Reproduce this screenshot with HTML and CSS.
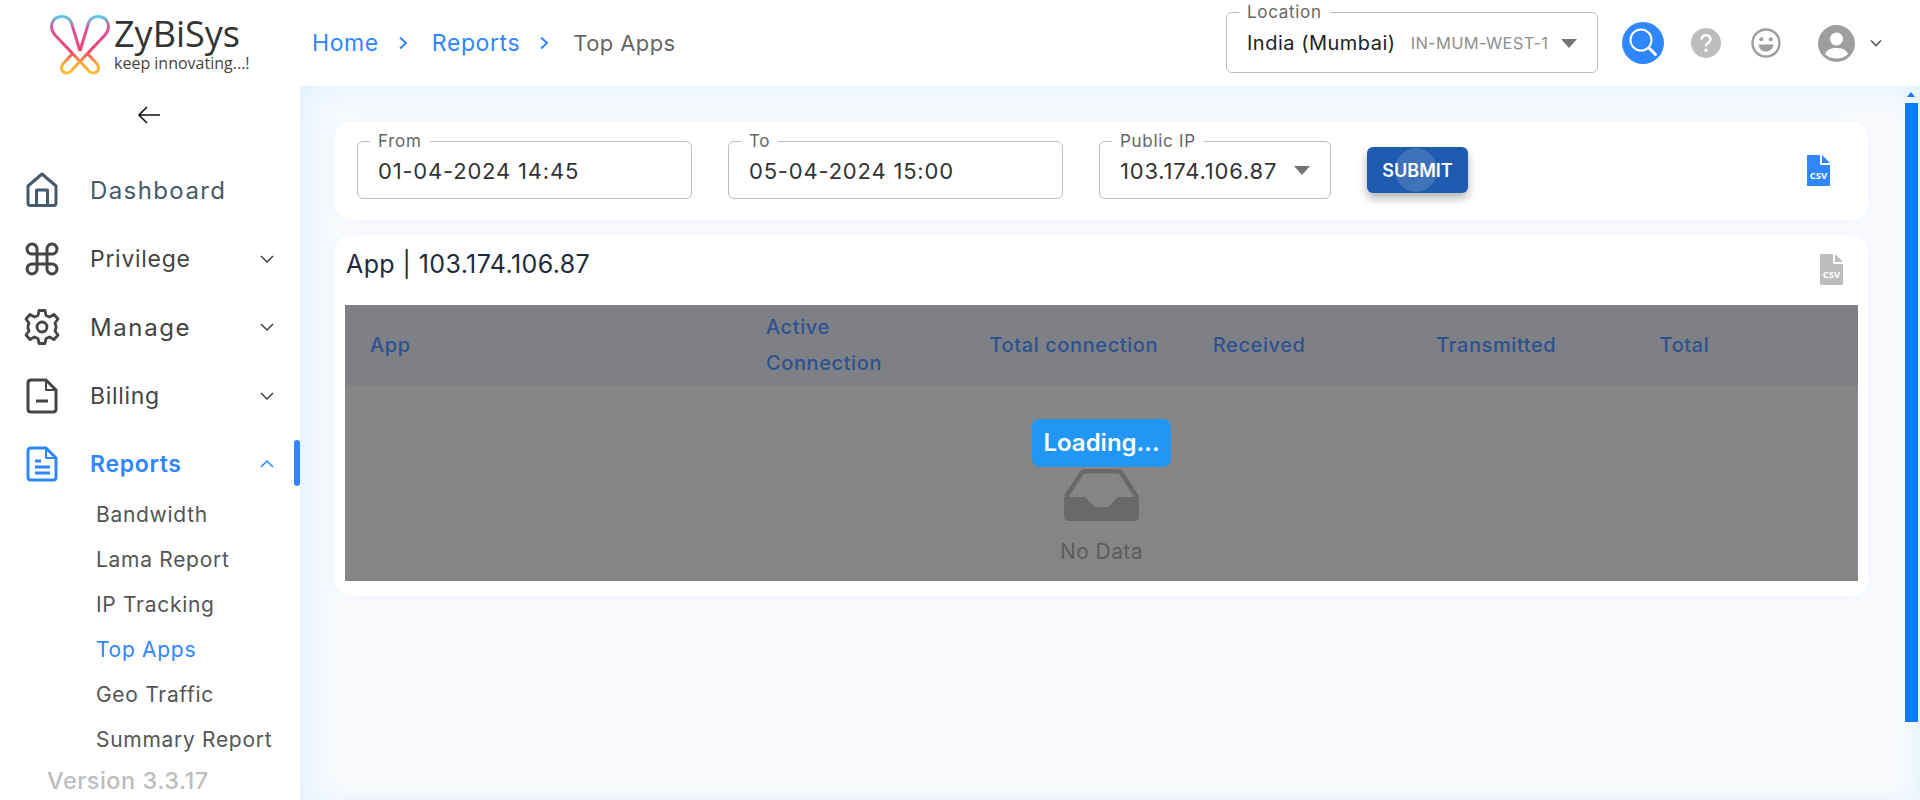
FILE: index.html

```html
<!DOCTYPE html>
<html lang="en">
<head>
  <meta charset="UTF-8">
  <meta name="viewport" content="width=device-width, initial-scale=1.0">
  <title>ZyBiSys - Top Apps</title>
  <link rel="stylesheet" href="styles.css">
</head>
<body>
  <header class="topbar">
    <div class="brand">
      <svg class="brand-mark" viewBox="0 0 60 60" fill="none">
        <defs>
          <linearGradient id="logoGrad" gradientUnits="userSpaceOnUse" x1="0" y1="0" x2="0" y2="60">
            <stop offset="0" stop-color="#4fd9ee"/>
            <stop offset=".22" stop-color="#d9559b"/>
            <stop offset=".6" stop-color="#f2456b"/>
            <stop offset=".8" stop-color="#fca73a"/>
            <stop offset="1" stop-color="#fbc02d"/>
          </linearGradient>
        </defs>
        <path d="M30 36L21.5 8C20 3.5 16 1.5 11.5 1.5C5 1.5 1.5 6.5 1.5 11.5C1.5 15 3 17.5 5 20L38 55C40 58 44 59 46.5 57C49 55 49 51 47 49L37 38" stroke="url(#logoGrad)" stroke-width="3"/>
        <path d="M30 36L38.5 8C40 3.5 44 1.5 48.5 1.5C55 1.5 58.5 6.5 58.5 11.5C58.5 15 57 17.5 55 20L22 55C20 58 16 59 13.5 57C11 55 11 51 13 49L23 38" stroke="url(#logoGrad)" stroke-width="3"/>
      </svg>
      <div class="brand-text">
        <div class="brand-name">ZyBiSys</div>
        <div class="brand-tag">keep innovating...!</div>
      </div>
    </div>
    <nav class="crumbs">
      <a href="#">Home</a>
      <svg class="crumb-sep" viewBox="0 0 10 14" fill="none"><path d="M2 1.5L8 7L2 12.5" stroke="#2f86ff" stroke-width="2"/></svg>
      <a href="#">Reports</a>
      <svg class="crumb-sep" viewBox="0 0 10 14" fill="none"><path d="M2 1.5L8 7L2 12.5" stroke="#2f86ff" stroke-width="2"/></svg>
      <span>Top Apps</span>
    </nav>
    <div class="top-actions">
      <fieldset class="field field-location">
        <legend>Location</legend>
        <div class="field-value">
          <span class="loc-name">India (Mumbai)</span>
          <span class="loc-code">IN-MUM-WEST-1</span>
          <span class="caret"></span>
        </div>
      </fieldset>
      <button class="search-btn">
        <svg viewBox="0 0 42 42" fill="none"><circle cx="19" cy="18" r="10.5" stroke="#fff" stroke-width="2"/><path d="M27 26L33.5 32.5" stroke="#fff" stroke-width="3" stroke-linecap="round"/></svg>
      </button>
      <svg class="top-icon icon-help" viewBox="0 0 30 30"><circle cx="15" cy="15" r="15" fill="#bdbdbd"/><path d="M10.5 11.5C10.5 8.8 12.5 7.3 15 7.3C17.6 7.3 19.5 8.9 19.5 11.2C19.5 13 18.5 14 17 15C15.6 16 15 16.6 15 18.3" fill="none" stroke="#fff" stroke-width="2.6"/><circle cx="15" cy="22.2" r="1.8" fill="#fff"/></svg>
      <svg class="top-icon icon-smile" viewBox="0 0 30 30"><circle cx="15" cy="15" r="13.5" fill="none" stroke="#9e9e9e" stroke-width="2.4"/><circle cx="10.3" cy="11.3" r="2" fill="#9e9e9e"/><circle cx="19.7" cy="11.3" r="2" fill="#9e9e9e"/><path d="M7.5 16.5H22.5C22 21 19 23.5 15 23.5C11 23.5 8 21 7.5 16.5Z" fill="#9e9e9e"/></svg>
      <svg class="top-avatar" viewBox="0 0 37 37"><circle cx="18.5" cy="18.5" r="18.5" fill="#9e9e9e"/><circle cx="18.5" cy="14" r="6.5" fill="#fff"/><path d="M7 29C9 24.5 13 23 18.5 23C24 23 28 24.5 30 29C27 32 23 33.5 18.5 33.5C14 33.5 10 32 7 29Z" fill="#fff"/></svg>
      <svg class="top-chevron" viewBox="0 0 12 8" fill="none"><path d="M1 1.5L6 6.5L11 1.5" stroke="#555" stroke-width="1.6"/></svg>
    </div>
  </header>

  <div class="shell">
    <aside class="sidebar">
      <div class="collapse">
        <svg viewBox="0 0 24 20" fill="none"><path d="M23 10H2M10 2L2 10L10 18" stroke="#111" stroke-width="1.6"/></svg>
      </div>
      <ul class="menu">
        <li class="menu-item item-home">
          <svg class="menu-icon" viewBox="0 0 36 36" fill="none" stroke="#455a6a" stroke-width="3" stroke-linejoin="round"><path d="M18 2L32 14V31C32 32.5 31 33.5 29.5 33.5H6.5C5 33.5 4 32.5 4 31V14Z"/><path d="M12.5 33V18H23.5V33"/></svg>
          <span>Dashboard</span>
        </li>
        <li class="menu-item">
          <svg class="menu-icon" viewBox="0 0 36 36" fill="none" stroke="#444" stroke-width="3"><path d="M13 13H23V23H13ZM13 13H8.5A5 5 0 1 1 13 8.5ZM23 13V8.5A5 5 0 1 1 27.5 13ZM23 23H27.5A5 5 0 1 1 23 27.5ZM13 23V27.5A5 5 0 1 1 8.5 23Z"/></svg>
          <span>Privilege</span>
          <svg class="menu-chevron" viewBox="0 0 14 8" fill="none"><path d="M1 1L7 7L13 1" stroke="#444" stroke-width="1.5"/></svg>
        </li>
        <li class="menu-item">
          <svg class="menu-icon" viewBox="0 0 36 36" fill="none" stroke="#444" stroke-width="2.8" stroke-linejoin="round"><circle cx="18" cy="18" r="5"/><path d="M15 1.5H21L22 6.5L25.5 8L30 5.5L34 10L31 14L32 17V19L31 22L34 26L30 30.5L25.5 28L22 29.5L21 34.5H15L14 29.5L10.5 28L6 30.5L2 26L5 22L4 19V17L5 14L2 10L6 5.5L10.5 8L14 6.5Z"/></svg>
          <span class="wide-label">Manage</span>
          <svg class="menu-chevron" viewBox="0 0 14 8" fill="none"><path d="M1 1L7 7L13 1" stroke="#444" stroke-width="1.5"/></svg>
        </li>
        <li class="menu-item">
          <svg class="menu-icon" viewBox="0 0 36 36" fill="none" stroke="#444" stroke-width="3" stroke-linejoin="round"><path d="M9 2H22L32 12V31C32 32.8 31 34 29 34H7C5 34 4 32.8 4 31V5C4 3 5 2 7 2Z"/><path d="M22 2V12H32" stroke-width="2"/><path d="M12 23H24"/></svg>
          <span>Billing</span>
          <svg class="menu-chevron" viewBox="0 0 14 8" fill="none"><path d="M1 1L7 7L13 1" stroke="#444" stroke-width="1.5"/></svg>
        </li>
        <li class="menu-item menu-active">
          <svg class="menu-icon" viewBox="0 0 36 36" fill="none" stroke="#2f86ff" stroke-width="3" stroke-linejoin="round"><path d="M9 2H22L32 12V31C32 32.8 31 34 29 34H7C5 34 4 32.8 4 31V5C4 3 5 2 7 2Z"/><path d="M22 2V12H32" stroke-width="2"/><path d="M11 15H17M11 21H26M11 27H26"/></svg>
          <span>Reports</span>
          <svg class="menu-chevron" viewBox="0 0 14 8" fill="none"><path d="M1 7L7 1L13 7" stroke="#2f86ff" stroke-width="1.5"/></svg>
          <i class="active-bar"></i>
        </li>
      </ul>
      <ul class="submenu">
        <li>Bandwidth</li>
        <li>Lama Report</li>
        <li>IP Tracking</li>
        <li class="sub-active">Top Apps</li>
        <li>Geo Traffic</li>
        <li>Summary Report</li>
      </ul>
      <div class="version">Version 3.3.17</div>
    </aside>

    <main class="content">
      <section class="card filter-card">
        <fieldset class="field field-date">
          <legend>From</legend>
          <div class="field-value">01-04-2024 14:45</div>
        </fieldset>
        <fieldset class="field field-date">
          <legend>To</legend>
          <div class="field-value">05-04-2024 15:00</div>
        </fieldset>
        <fieldset class="field field-ip">
          <legend>Public IP</legend>
          <div class="field-value">103.174.106.87<span class="caret"></span></div>
        </fieldset>
        <button class="submit-btn">SUBMIT<i class="ripple"></i></button>
        <svg class="csv-icon csv-blue" viewBox="0 0 23 31">
          <path d="M0 0H13V10H23V31H0Z" fill="#2f86ff"/><path d="M15 0L23 8H15Z" fill="#2f86ff"/>
          <text x="11.5" y="24" text-anchor="middle" class="csv-label">CSV</text>
        </svg>
      </section>

      <section class="card table-card">
        <div class="table-head">
          <h2>App | 103.174.106.87</h2>
          <svg class="csv-icon csv-grey" viewBox="0 0 23 31">
            <path d="M0 0H13V10H23V31H0Z" fill="#bdbdbd"/><path d="M15 0L23 8H15Z" fill="#bdbdbd"/>
            <text x="11.5" y="24" text-anchor="middle" class="csv-label">CSV</text>
          </svg>
        </div>
        <div class="table-wrap">
          <table class="data-table">
            <colgroup>
              <col class="col-app"><col><col><col><col><col>
            </colgroup>
            <thead>
              <tr>
                <th>App</th>
                <th>Active<br>Connection</th>
                <th>Total connection</th>
                <th>Received</th>
                <th>Transmitted</th>
                <th>Total</th>
              </tr>
            </thead>
            <tbody>
              <tr>
                <td colspan="6" class="empty-cell">
                  <svg class="empty-icon" viewBox="0 0 75 52"><path d="M2 28L17 5C18 3 20 2.2 22 2.2H53C55 2.2 57 3 58 5L73 28" fill="none" stroke="#696969" stroke-width="4.5"/><path d="M0 28H21L31 38H44L54 28H75V47C75 50 73 52 70 52H5C2 52 0 50 0 47Z" fill="#696969"/></svg>
                  <div class="empty-text">No Data</div>
                </td>
              </tr>
            </tbody>
          </table>
          <div class="loading">Loading...</div>
        </div>
      </section>
    </main>
  </div>

  <div class="scroll-arrow"></div>
  <div class="scroll-thumb"></div>
</body>
</html>
```

FILE: styles.css

```css
* {
  box-sizing: border-box;
}
html, body {
  height: 100%;
}
body {
  margin: 0;
  height: 800px;
  overflow: hidden;
  display: flex;
  flex-direction: column;
  background-color: #fff;
  font-family: 'Inter', 'Noto Sans', sans-serif;
  color: #444;
}

/* top bar */
.topbar {
  height: 86px;
  flex: none;
  display: flex;
  align-items: center;
  background-color: #fff;
}
.brand {
  width: 312px;
  height: 86px;
  flex: none;
  display: flex;
  align-items: flex-start;
  padding-left: 50px;
  gap: 4px;
}
.brand-mark {
  width: 60px;
  height: 60px;
  margin-top: 15px;
}
.brand-text {
  font-family: 'Open Sans', sans-serif;
  color: #333;
}
.brand-name {
  font-size: 36px;
  line-height: 40px;
  margin-top: 14px;
}
.brand-tag {
  font-size: 16px;
  line-height: 18px;
  color: #444;
}
.crumbs {
  display: flex;
  align-items: center;
  font-size: 22px;
  letter-spacing: .4px;
  color: #666;
}
.crumbs a {
  font-size: 23px;
  letter-spacing: .6px;
  color: #2f86ff;
  text-decoration: none;
}
.crumb-sep {
  width: 10px;
  height: 14px;
  margin: 0 24px 0 19px;
}
.top-actions {
  margin-left: auto;
  height: 86px;
  display: flex;
  align-items: center;
}

/* outlined fields */
.field {
  margin: 0;
  padding: 0 20px;
  border: 1px solid #bdbdbd;
  border-radius: 6px;
  min-width: 0;
}
.field legend {
  margin-left: -8px;
  padding: 0 8px;
  font-size: 17px;
  line-height: 24px;
  color: #666;
  letter-spacing: .7px;
}
.field-value {
  display: flex;
  align-items: center;
  color: #333;
  font-size: 22px;
  letter-spacing: .8px;
}
.caret {
  width: 0;
  height: 0;
  border-left: 8px solid transparent;
  border-right: 8px solid transparent;
  border-top: 9px solid #757575;
  margin-left: auto;
}
.field-location {
  width: 372px;
  height: 73px;
  align-self: flex-start;
}
.field-location .field-value {
  height: 38px;
}
.loc-name {
  font-size: 20px;
  color: #222;
  letter-spacing: .5px;
}
.loc-code {
  font-size: 16.5px;
  letter-spacing: .3px;
  color: #8f8f8f;
  margin-left: 15px;
}
.search-btn {
  width: 42px;
  height: 42px;
  padding: 0;
  margin-left: 24px;
  border: none;
  border-radius: 50%;
  background-color: #2f86ff;
}
.search-btn svg {
  display: block;
}
.top-icon {
  width: 30px;
  height: 30px;
}
.icon-help {
  margin-left: 27px;
}
.icon-smile {
  margin-left: 30px;
}
.top-avatar {
  width: 37px;
  height: 37px;
  margin-left: 37px;
}
.top-chevron {
  width: 12px;
  height: 8px;
  margin: 0 38px 0 15px;
}

/* shell */
.shell {
  flex: 1;
  display: flex;
  min-height: 0;
}
.sidebar {
  width: 300px;
  flex: none;
  position: relative;
  background-color: #fff;
}
.collapse {
  height: 70px;
  padding-left: 137px;
  padding-top: 19px;
}
.collapse svg {
  width: 24px;
  height: 20px;
  display: block;
}
.menu, .submenu {
  list-style: none;
  margin: 0;
  padding: 0;
}
.menu-item {
  height: 68.5px;
  display: flex;
  align-items: center;
  position: relative;
  padding-left: 24px;
  font-size: 23px;
  letter-spacing: .7px;
  color: #444;
}
.item-home {
  color: #455a6a;
  font-size: 24px;
  letter-spacing: 1.4px;
}
.wide-label {
  font-size: 24px;
  letter-spacing: 1.6px;
}
.menu-icon {
  width: 36px;
  height: 36px;
  flex: none;
  margin-right: 30px;
}
.menu-chevron {
  width: 14px;
  height: 8px;
  position: absolute;
  left: 260px;
  top: 30px;
}
.menu-active {
  color: #2f86ff;
  font-weight: 600;
}
.active-bar {
  position: absolute;
  right: 0;
  top: 10px;
  width: 6px;
  height: 46px;
  border-radius: 4px;
  background-color: #2f86ff;
}
.submenu {
  padding-left: 96px;
  margin-top: -6.5px;
}
.submenu li {
  height: 45px;
  line-height: 45px;
  font-size: 21px;
  letter-spacing: .7px;
  color: #555;
  white-space: nowrap;
}
.submenu .sub-active {
  color: #2f86ff;
}
.version {
  padding-left: 47px;
  font-size: 23.5px;
  line-height: 38px;
  letter-spacing: .5px;
  font-weight: 500;
  color: #bdbdbd;
}

/* main */
.content {
  flex: 1;
  min-width: 0;
  padding: 35px 52px 0 35px;
  background-color: #f9faff;
  box-shadow: inset 0 10px 30px -6px #e4f2fd, inset 22px 0 34px -12px #e4f2fd, inset -16px -2px 24px -14px #e4f2fd;
}
.card {
  background-color: #fff;
  border-radius: 16px;
  box-shadow: 0 0 8px #eef6fe;
}
.filter-card {
  height: 99px;
  padding: 8px 38px 0 22px;
  display: flex;
  align-items: flex-start;
}
.field-date {
  width: 335px;
  height: 70px;
  margin-right: 36px;
}
.field-date .field-value, .field-ip .field-value {
  height: 35px;
}
.field-ip {
  width: 232px;
  height: 70px;
  margin-right: 36px;
}
.submit-btn {
  position: relative;
  overflow: hidden;
  width: 101px;
  height: 46px;
  margin-top: 18px;
  border: none;
  border-radius: 6px;
  background-color: #1f5bae;
  color: #fff;
  font-family: inherit;
  font-size: 18px;
  font-weight: 600;
  box-shadow: 0 5px 10px rgba(0, 0, 0, .3);
}
.ripple {
  position: absolute;
  left: 28px;
  top: 1px;
  width: 42px;
  height: 44px;
  border-radius: 50%;
  background-color: rgba(255, 255, 255, .14);
}
.csv-icon {
  width: 23px;
  height: 31px;
  flex: none;
}
.csv-blue {
  margin-left: auto;
  margin-top: 26px;
}
.csv-label {
  font-family: 'Open Sans', sans-serif;
  font-size: 9.5px;
  font-weight: 700;
  fill: #fff;
}
.table-card {
  margin-top: 15px;
  height: 361px;
  padding: 0 10px;
}
.table-head {
  height: 70px;
  display: flex;
  justify-content: space-between;
  padding-right: 15px;
}
.table-head h2 {
  margin: 14px 0 0 1px;
  font-size: 25px;
  line-height: 30px;
  font-weight: 400;
  letter-spacing: .4px;
  color: #1e2a3c;
}
.csv-grey {
  margin-top: 19px;
}
.table-wrap {
  position: relative;
}
.data-table {
  width: 100%;
  table-layout: fixed;
  border-collapse: collapse;
}
.col-app {
  width: 396px;
}
.data-table th {
  height: 81px;
  padding: 0 0 2px 25px;
  text-align: left;
  font-size: 20px;
  line-height: 36px;
  font-weight: 500;
  letter-spacing: .6px;
  color: #2d5290;
  background-color: #7e8085;
  white-space: nowrap;
}
.empty-cell {
  height: 195px;
  padding: 83px 0 0;
  vertical-align: top;
  text-align: center;
  background-color: #858585;
}
.empty-icon {
  width: 75px;
  height: 52px;
  display: block;
  margin: 0 auto;
}
.empty-text {
  margin-top: 17px;
  font-size: 21px;
  line-height: 28px;
  letter-spacing: .4px;
  color: #5c5c5c;
}
.loading {
  position: absolute;
  left: 687px;
  top: 114px;
  width: 139px;
  height: 48px;
  line-height: 48px;
  text-align: center;
  border-radius: 8px;
  background-color: #2196f3;
  color: #fff;
  font-size: 24px;
  font-weight: 600;
}

/* scrollbar */
.scroll-arrow {
  position: absolute;
  left: 1907px;
  top: 92px;
  width: 0;
  height: 0;
  border-left: 4px solid transparent;
  border-right: 4px solid transparent;
  border-bottom: 5px solid #0a7aff;
}
.scroll-thumb {
  position: absolute;
  left: 1905px;
  top: 103px;
  width: 13px;
  height: 619px;
  background-color: #0a7aff;
}
```
